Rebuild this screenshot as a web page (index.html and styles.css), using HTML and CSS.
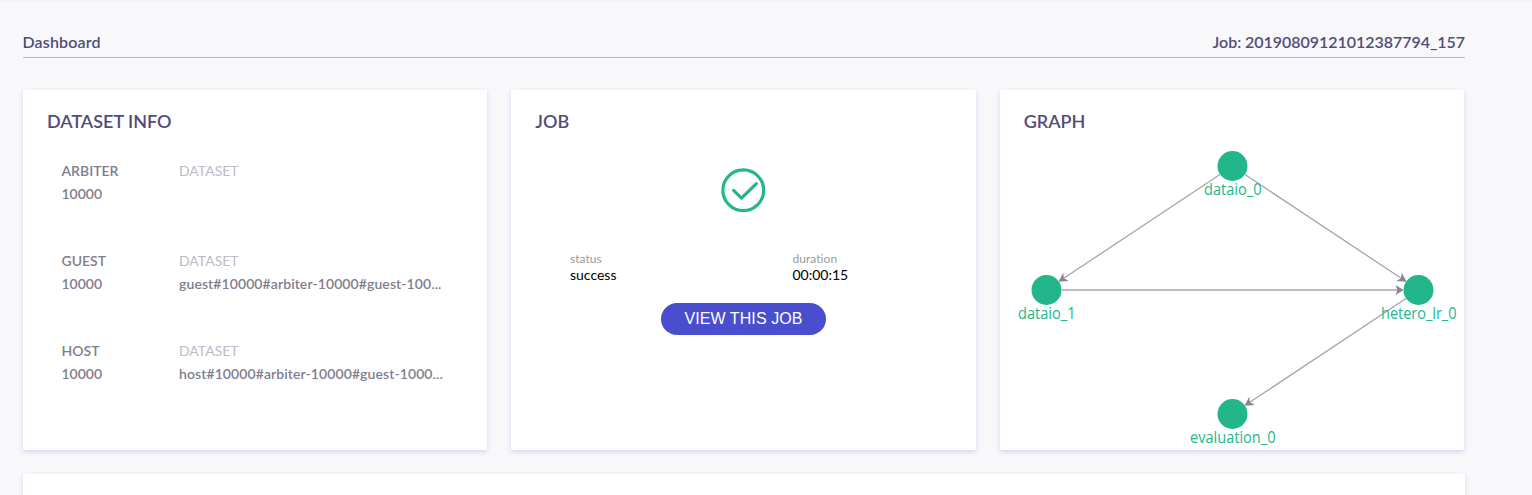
FILE: index.html
```html
<!DOCTYPE html>
<html lang="en">
<head>
<meta charset="utf-8">
<title>Dashboard</title>
<link rel="stylesheet" href="styles.css">
</head>
<body>
<main class="page">
  <header class="topbar">
    <span class="topbar-title">Dashboard</span>
    <span class="topbar-job">Job: 20190809121012387794_157</span>
  </header>
  <div class="cards">
    <section class="card">
      <h2 class="card-title">DATASET INFO</h2>
      <div class="dataset-list">
        <div class="party">
          <div class="party-id"><div class="role">ARBITER</div><div class="value">10000</div></div>
          <div class="party-data"><div class="label">DATASET</div></div>
        </div>
        <div class="party">
          <div class="party-id"><div class="role">GUEST</div><div class="value">10000</div></div>
          <div class="party-data"><div class="label">DATASET</div><div class="value">guest#10000#arbiter-10000#guest-100...</div></div>
        </div>
        <div class="party">
          <div class="party-id"><div class="role">HOST</div><div class="value">10000</div></div>
          <div class="party-data"><div class="label">DATASET</div><div class="value">host#10000#arbiter-10000#guest-1000...</div></div>
        </div>
      </div>
    </section>
    <section class="card">
      <h2 class="card-title">JOB</h2>
      <div class="job-body">
        <svg class="check" viewBox="0 0 46 46">
          <circle cx="23.300" cy="23.200" r="20.400"/>
          <path d="M13.600 23.400 21.500 31.200 36.400 16.700"/>
        </svg>
        <div class="job-stats">
          <div class="stat"><div class="stat-label">status</div><div class="stat-value">success</div></div>
          <div class="stat stat-duration"><div class="stat-label">duration</div><div class="stat-value">00:00:15</div></div>
        </div>
        <button class="view-button" type="button">VIEW THIS JOB</button>
      </div>
    </section>
    <section class="card">
      <h2 class="card-title">GRAPH</h2>
      <svg class="graph" viewBox="1000 140 464 310">
        <g class="edge">
          <path d="M1220 174.500 1063 278.800"/>
          <path d="M1245 174.500 1402 278.800"/>
          <path class="edge-flat" d="M1062 290H1400"/>
          <path d="M1406 298.500 1249 402.800"/>
        </g>
        <g class="arrow">
          <path d="M0 0-9-5-6.500 0-9 5Z" transform="translate(1058.500 281.800) rotate(146.300)"/>
          <path d="M0 0-9-5-6.500 0-9 5Z" transform="translate(1406.500 281.800) rotate(33.700)"/>
          <path d="M0 0-8-5-6 0-8 5Z" transform="translate(1403.500 290)"/>
          <path d="M0 0-9-5-6.500 0-9 5Z" transform="translate(1244.500 405.800) rotate(146.300)"/>
        </g>
        <g class="node">
          <circle cx="1232.500" cy="166" r="15"/>
          <circle cx="1046.500" cy="290" r="15"/>
          <circle cx="1418.500" cy="290" r="15"/>
          <circle cx="1232.500" cy="414" r="15"/>
        </g>
        <g class="node-label">
          <text x="1204" y="195" textLength="57.500" lengthAdjust="spacingAndGlyphs">dataio_0</text>
          <text x="1018" y="319" textLength="57.500" lengthAdjust="spacingAndGlyphs">dataio_1</text>
          <text x="1381" y="319" textLength="75.500" lengthAdjust="spacingAndGlyphs">hetero_lr_0</text>
          <text x="1190" y="443" textLength="85.500" lengthAdjust="spacingAndGlyphs">evaluation_0</text>
        </g>
      </svg>
    </section>
  </div>
  <section class="panel"></section>
</main>
</body>
</html>
```
FILE: styles.css
```css
* { box-sizing: border-box; }
body {
  margin: 0;
  height: 495px;
  overflow: hidden;
  background: #f8f8fa;
  font-family: Lato, "Liberation Sans", sans-serif;
}
.page {
  height: 495px;
  padding: 31px 67px 0 23px;
  overflow: hidden;
  box-shadow: inset 0 2px 2px -1px #f0f0f7;
}
.topbar {
  display: flex;
  justify-content: space-between;
  height: 27px;
  border-bottom: 1px solid #bbbbbe;
  color: #534c77;
  font-size: 16px;
  font-weight: 600;
  line-height: 22px;
}
.topbar-title { margin-left: -0.500px; letter-spacing: 0.150px; }
.topbar-job { letter-spacing: -0.040px; }
.cards {
  display: grid;
  grid-template-columns: repeat(3, 464.330px);
  gap: 24px;
  margin-top: 32px;
}
.card, .panel {
  background: #fff;
  box-shadow: 0 2px 5px #d6d4f2;
}
.card { height: 360px; padding-top: 19px; }
.card-title {
  margin: 0 0 0 24px;
  height: 24px;
  color: #534c77;
  font-size: 18px;
  font-weight: 600;
  line-height: 24px;
}
.dataset-list { padding: 26px 39px 0 38.500px; }
.party {
  display: flex;
  height: 90px;
  color: #7f7d8e;
  font-size: 14px;
  font-weight: 600;
  line-height: 23px;
}
.party-id { width: 117.500px; }
.party-data { white-space: nowrap; letter-spacing: 0.090px; }
.label { color: #bbbbc8; font-weight: 400; letter-spacing: 0; }
.job-body {
  display: flex;
  flex-direction: column;
  align-items: center;
  padding-top: 34px;
}
.check {
  width: 46px;
  height: 46px;
  fill: none;
  stroke: #24b68b;
  stroke-width: 3.200;
  stroke-linecap: round;
  stroke-linejoin: round;
}
.job-stats {
  display: flex;
  width: 347px;
  margin-top: 38px;
}
.stat { width: 222.500px; }
.stat-duration { width: 100px; }
.stat-label { height: 15px; color: #999; font-size: 12px; line-height: 15px; letter-spacing: 0.050px; }
.stat-value { height: 18px; color: #000; font-size: 14px; line-height: 18px; }
.view-button {
  width: 165px;
  height: 32px;
  margin-top: 19px;
  padding: 0;
  border: 0;
  border-radius: 16px;
  background: #494ece;
  color: #fff;
  font: 16px "Liberation Sans", Arial, sans-serif;
  letter-spacing: 0.080px;
}
.graph { display: block; width: 464px; height: 310px; margin-top: 7px; }
.edge { fill: none; stroke: #a5a3b0; stroke-width: 1.300; }
.edge-flat { stroke: #bdbbc5; stroke-width: 2; }
.arrow { fill: #878494; }
.node { fill: #24b68b; }
.node-label { fill: #24b68b; font: 16px "Open Sans", "Noto Sans", sans-serif; }
.panel { height: 100px; margin-top: 24px; }
```
